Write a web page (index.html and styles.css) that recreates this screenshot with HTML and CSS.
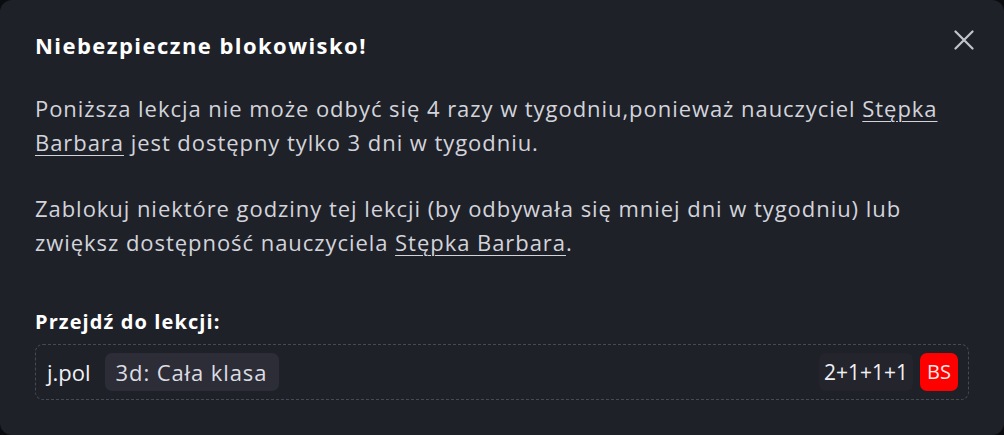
FILE: index.html
```html
<!DOCTYPE html>
<html lang="pl">
<head>
<meta charset="utf-8">
<link rel="stylesheet" href="styles.css">
</head>
<body>
<div class="modal">
  <div class="modal-header">
    <h2 class="modal-title">Niebezpieczne blokowisko!</h2>
    <button class="close-btn" aria-label="Zamknij">
      <svg width="20" height="20" viewBox="0 0 20 20"><path d="M1.5 1.5 L18.5 18.5 M18.5 1.5 L1.5 18.5" stroke="currentColor" stroke-width="2.2" stroke-linecap="round" fill="none"/></svg>
    </button>
  </div>
  <div class="modal-body">
    <p class="msg">Poniższa lekcja nie może odbyć się 4 razy w tygodniu,ponieważ nauczyciel <a class="link" href="#">Stępka Barbara</a> jest dostępny tylko 3 dni w tygodniu.</p>
    <p class="msg msg-last">Zablokuj niektóre godziny tej lekcji (by odbywała się mniej dni w tygodniu) lub zwiększ dostępność nauczyciela <a class="link" href="#">Stępka Barbara</a>.</p>
    <h3 class="section-title">Przejdź do lekcji:</h3>
    <div class="lesson">
      <span class="subject">j.pol</span>
      <span class="chip">3d: Cała klasa</span>
      <span class="spacer"></span>
      <span class="count">2+1+1+1</span>
      <span class="badge">BS</span>
    </div>
  </div>
</div>
</body>
</html>
```
FILE: styles.css
```css
html, body {
  margin: 0;
  padding: 0;
  background: #0b0c0f;
}
body {
  font-family: "Open Sans", "Noto Sans", sans-serif;
  color: #d3d4db;
}
.modal {
  box-sizing: border-box;
  width: 1004px;
  height: 435px;
  background: #1f2129;
  border-radius: 12px;
  padding: 30px 35px 0 35px;
}
.modal-header {
  display: flex;
  justify-content: space-between;
  align-items: flex-start;
}
.modal-title {
  margin: 0;
  font-size: 22px;
  line-height: 30px;
  font-weight: 700;
  letter-spacing: 1.45px;
  color: #ffffff;
}
.close-btn {
  background: none;
  border: 0;
  padding: 0;
  margin: 0 -5px 0 0;
  color: #c4c5cc;
  width: 20px;
  height: 20px;
  cursor: pointer;
}
.close-btn svg { display: block; }
.modal-body { margin-top: 32px; }
.msg {
  margin: 0 0 33px 0;
  font-size: 22px;
  line-height: 33.5px;
  letter-spacing: 0.95px;
}
.msg-last { margin-bottom: 48.5px; }
.link {
  color: inherit;
  text-decoration: underline;
  text-underline-offset: 4px;
  text-decoration-thickness: 1px;
}
.section-title {
  margin: 0;
  font-size: 20px;
  line-height: 28px;
  font-weight: 700;
  letter-spacing: 1.1px;
  color: #ffffff;
}
.lesson {
  margin-top: 8px;
  box-sizing: border-box;
  height: 56px;
  border: 1px dashed #474953;
  border-radius: 8px;
  display: flex;
  align-items: center;
  padding: 0 10px 0 11px;
  font-size: 22px;
  color: #f0f0f4;
}
.subject { margin-right: 14px; letter-spacing: 0; }
.chip {
  background: #2c2d36;
  border-radius: 7px;
  padding: 0 12px 0 11px;
  height: 38px;
  line-height: 38px;
  letter-spacing: 0.9px;
  color: #dcdde3;
}
.spacer { flex: 1; }
.count {
  background: #23242c;
  border-radius: 7px;
  padding: 0 5px;
  height: 38px;
  line-height: 38px;
  font-size: 21px;
  margin-right: 7px;
}
.badge {
  background: #ff0000;
  border-radius: 7px;
  width: 38px;
  height: 38px;
  line-height: 38px;
  text-align: center;
  font-size: 20px;
  color: #ffe6e6;
}
```
